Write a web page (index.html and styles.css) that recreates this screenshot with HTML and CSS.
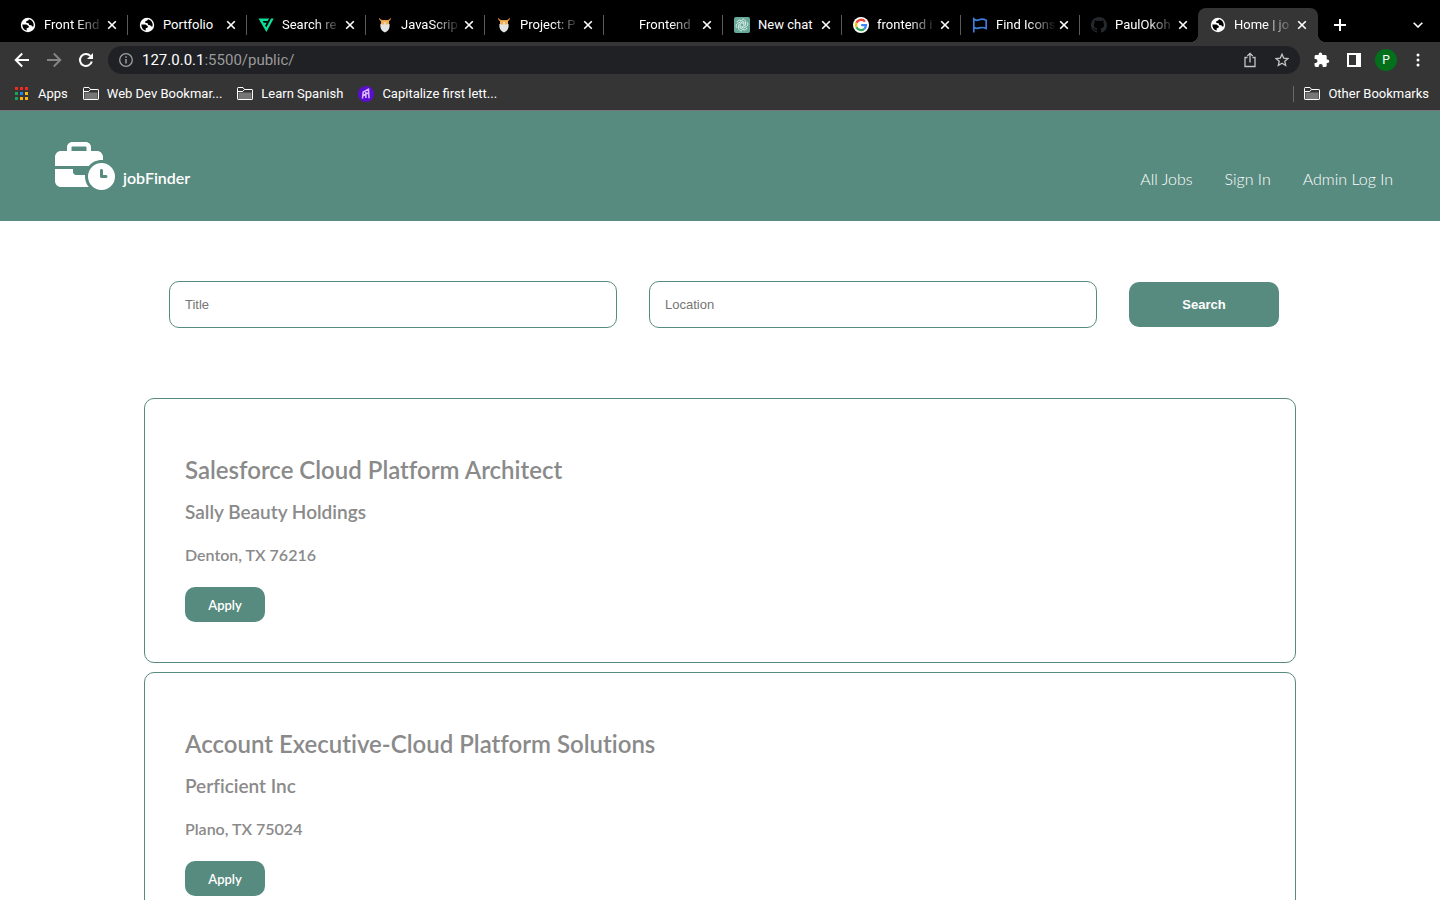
FILE: index.html
```
<!DOCTYPE html>
<html lang="en">
<head>
<meta charset="utf-8">
<title>Home | jobFinder</title>
<link rel="stylesheet" href="styles.css">
</head>
<body>
<svg class="sprite" aria-hidden="true">
  <symbol id="close" viewBox="0 0 10 10"><path d="M1.2 1.2l7.6 7.6M8.8 1.2L1.2 8.8" stroke="#fff" stroke-width="1.6" fill="none"/></symbol>
  <symbol id="globe" viewBox="0 0 16 16"><circle cx="8" cy="8" r="7.2" fill="#fff"/><path class="land" d="M2.300 7.500h4.200l2.400 1.700-.4 1.500-1.800.6v2.300c-2.500-.5-4.400-2.600-4.400-6.100zM9 2.300L8.200 3.500 6.300 4.200l-.2 1.600 2.500.5.7 1.600 2 .4.8 1.200 1.500-.3c.5-3-1-6-4.600-6.900z"/></symbol>
  <symbol id="odin" viewBox="0 0 16 16"><path d="M2 .8c0 2 .8 3 2 3.400h8c1.200-.4 2-1.400 2-3.400l-1.700 1.500L11 3H5L3.700 2.300z" fill="#d98e32"/><path d="M4 3.500h8v5H4z" fill="#efb15b"/><path d="M3.500 6.800l2 .7h5l2-.7c.6 3.900-.8 7.400-4.500 8.700C4.300 14.200 2.900 10.700 3.500 6.800z" fill="#e4e4e4"/><path d="M7.200 5h1.600v3H7.200z" fill="#f7ddb8"/></symbol>
  <symbol id="folder" viewBox="0 0 16 14"><path d="M1.500 5.500h13v7h-13z" fill="#777"/><path d="M.5 1.500v10.400c0 .4.200.6.600.6h13.800c.4 0 .6-.2.600-.6V3.100c0-.4-.2-.6-.6-.6H7.500L6 .5H1.100c-.4 0-.6.4-.6 1zM1 4.500h4.700l1.800-2" fill="none" stroke="#fff"/></symbol>
</svg>

<header class="browser">
  <nav class="tabs" aria-label="Tabs">
    <div class="tab"><svg class="fav"><use href="#globe"/></svg><span class="name">Front End</span><button class="x" aria-label="Close"><svg><use href="#close"/></svg></button></div>
    <div class="tab"><svg class="fav"><use href="#globe"/></svg><span class="name whole">Portfolio</span><button class="x" aria-label="Close"><svg><use href="#close"/></svg></button></div>
    <div class="tab"><svg class="fav" viewBox="0 0 16 16"><path d="M.5 1.500h10.700L9.600 4H4.700l1 1.800h3L7.500 8H6.900l1.400 2.500 4.700-9h2.700L8.400 15z" fill="#0be09b"/></svg><span class="name">Search re</span><button class="x" aria-label="Close"><svg><use href="#close"/></svg></button></div>
    <div class="tab"><svg class="fav"><use href="#odin"/></svg><span class="name">JavaScrip</span><button class="x" aria-label="Close"><svg><use href="#close"/></svg></button></div>
    <div class="tab"><svg class="fav"><use href="#odin"/></svg><span class="name">Project: P</span><button class="x" aria-label="Close"><svg><use href="#close"/></svg></button></div>
    <div class="tab"><svg class="fav"></svg><span class="name">Frontend</span><button class="x" aria-label="Close"><svg><use href="#close"/></svg></button></div>
    <div class="tab"><svg class="fav" viewBox="0 0 16 16"><rect width="16" height="16" rx="2" fill="#67aa9b"/><g fill="none" stroke="#fff" stroke-width=".7"><path id="petal" d="M8 2.300a2.700 2.700 0 0 1 3.500 2.600v3.300L8.300 10"/><use href="#petal" transform="rotate(60 8 8)"/><use href="#petal" transform="rotate(120 8 8)"/><use href="#petal" transform="rotate(180 8 8)"/><use href="#petal" transform="rotate(240 8 8)"/><use href="#petal" transform="rotate(300 8 8)"/></g></svg><span class="name whole">New chat</span><button class="x" aria-label="Close"><svg><use href="#close"/></svg></button></div>
    <div class="tab"><svg class="fav" viewBox="0 0 16 16"><circle cx="8" cy="8" r="8" fill="#fff"/><g fill="none" stroke-width="2.300"><path d="M12 4.600A5 5 0 0 0 3.500 5.800" stroke="#ea4335"/><path d="M3.500 5.800a5 5 0 0 0 0 4.400" stroke="#fbbc05"/><path d="M3.500 10.200a5 5 0 0 0 7.800 1.600" stroke="#34a853"/><path d="M11.300 11.800A5 5 0 0 0 13 8.100H8.200" stroke="#4285f4"/></g></svg><span class="name">frontend i</span><button class="x" aria-label="Close"><svg><use href="#close"/></svg></button></div>
    <div class="tab"><svg class="fav" viewBox="0 0 16 16"><path d="M1.800 15.500V2c2.500 2.200 3.800 1.300 5.500.7C9.700 1.800 11.500 2 14.200 3.200v8.200c-3-1.500-4.600-1.100-6.700-.5-2 .6-3.700.8-5.700-.7" fill="none" stroke="#3f7ddc" stroke-width="1.700"/></svg><span class="name">Find Icons</span><button class="x" aria-label="Close"><svg><use href="#close"/></svg></button></div>
    <div class="tab"><svg class="fav" viewBox="0 0 16 16"><path d="M8 0C3.580 0 0 3.580 0 8c0 3.540 2.290 6.530 5.470 7.590.4.070.55-.17.55-.38 0-.19-.01-.82-.01-1.490-2.010.37-2.530-.49-2.690-.94-.09-.23-.48-.94-.82-1.130-.28-.15-.68-.52-.01-.53.63-.01 1.080.58 1.230.82.72 1.210 1.870.87 2.330.66.07-.52.28-.87.51-1.070-1.780-.2-3.640-.89-3.640-3.950 0-.87.31-1.590.82-2.150-.08-.2-.36-1.020.08-2.120 0 0 .67-.21 2.200.82.64-.18 1.320-.27 2-.27s1.360.09 2 .27c1.530-1.040 2.200-.82 2.200-.82.44 1.100.16 1.920.08 2.120.51.56.82 1.270.82 2.150 0 3.070-1.870 3.750-3.650 3.950.29.25.54.73.54 1.480 0 1.070-.01 1.930-.01 2.200 0 .21.15.46.55.38A8.010 8.010 0 0 0 16 8c0-4.420-3.580-8-8-8z" fill="#24292e"/></svg><span class="name">PaulOkoh</span><button class="x" aria-label="Close"><svg><use href="#close"/></svg></button></div>
    <div class="tab active"><svg class="fav"><use href="#globe"/></svg><span class="name">Home | jo</span><button class="x" aria-label="Close"><svg><use href="#close"/></svg></button></div>
    <button class="newtab" aria-label="New tab"><svg width="12" height="12" viewBox="0 0 12 12"><path d="M6 0v12M0 6h12" stroke="#fff" stroke-width="2"/></svg></button>
    <button class="tabsearch" aria-label="Search tabs"><svg width="10" height="6" viewBox="0 0 10 6"><path d="M.7.7L5 5 9.300.7" fill="none" stroke="#fff" stroke-width="1.600"/></svg></button>
  </nav>

  <div class="toolbar">
    <button aria-label="Back"><svg width="16" height="16" viewBox="0 0 16 16"><path d="M15 8H2M8.200 1.500L1.700 8l6.500 6.500" fill="none" stroke="#fff" stroke-width="1.900"/></svg></button>
    <button aria-label="Forward"><svg width="16" height="16" viewBox="0 0 16 16"><path d="M1 8h13M7.800 1.500L14.300 8l-6.500 6.500" fill="none" stroke="#868686" stroke-width="1.900"/></svg></button>
    <button aria-label="Reload"><svg width="16" height="16" viewBox="0 0 16 16"><path d="M13.800 9.500A6 6 0 1 1 12.400 3.900" fill="none" stroke="#fff" stroke-width="2"/><path d="M15 1v6H9z" fill="#fff"/></svg></button>
    <div class="address">
      <svg width="14" height="14" viewBox="0 0 14 14"><circle cx="7" cy="7" r="6.300" fill="none" stroke="#9aa0a6" stroke-width="1.300"/><path d="M7 6v4.500M7 3.300v1.500" stroke="#9aa0a6" stroke-width="1.500"/></svg>
      <span class="url"><b>127.0.0.1</b>:5500/public/</span>
      <svg width="12" height="16" viewBox="0 0 12 16"><path d="M3.500 5.500H1v9h10v-9H8.500M6 10.500V1.500M3.300 4L6 1.300 8.700 4" fill="none" stroke="#c4c4c4" stroke-width="1.300"/></svg>
      <svg width="14" height="14" viewBox="0 0 14 14"><path d="M7 1.200l1.700 3.900 4.300.4-3.200 2.800.9 4.200L7 10.300l-3.700 2.200.9-4.200L1 5.500l4.300-.4z" fill="none" stroke="#c4c4c4" stroke-width="1.300"/></svg>
    </div>
    <button aria-label="Extensions"><svg width="16" height="16" viewBox="0 0 16 16"><path d="M13.500 7.500h-.8V4.300c0-.8-.6-1.400-1.400-1.400H8.200V2.200a1.800 1.800 0 0 0-3.600 0v.7H2C1.200 2.900.6 3.500.6 4.300v2.600h.9a2 2 0 0 1 0 4H.6v2.700c0 .8.6 1.400 1.400 1.400h2.700v-.9a2 2 0 0 1 4 0v.9h2.600c.8 0 1.400-.6 1.400-1.400v-2.500h.8a1.800 1.800 0 0 0 0-3.600z" fill="#fff"/></svg></button>
    <button aria-label="Side panel"><svg width="14" height="14" viewBox="0 0 14 14"><path d="M1 1h12v12H1z" fill="none" stroke="#fff" stroke-width="2"/><path d="M9 1h4v12H9z" fill="#fff"/></svg></button>
    <button class="avatar">P</button>
    <button aria-label="Menu"><svg width="4" height="14" viewBox="0 0 4 14"><g fill="#fff"><circle cx="2" cy="2" r="1.500"/><circle cx="2" cy="7" r="1.500"/><circle cx="2" cy="12" r="1.500"/></g></svg></button>
  </div>

  <nav class="bookmarks" aria-label="Bookmarks">
    <a href="#"><svg width="14" height="14" viewBox="0 0 14 14"><path d="M0 0h3v3H0zM5 0h3v3H5zM10 0h3v3h-3z" fill="#f0281e"/><path d="M0 5h3v3H0zM0 10h3v3H0z" fill="#17a556"/><path d="M5 5h3v3H5z" fill="#1c86f2"/><path d="M10 5h3v3h-3zM5 10h3v3H5zM10 10h3v3h-3z" fill="#fbb416"/></svg>Apps</a>
    <a href="#"><svg width="16" height="14"><use href="#folder"/></svg>Web Dev Bookmar...</a>
    <a href="#"><svg width="16" height="14"><use href="#folder"/></svg>Learn Spanish</a>
    <a href="#"><svg width="16" height="16" viewBox="0 0 16 16"><circle cx="8" cy="8" r="8" fill="#5a0fd0"/><path d="M4.500 12.500l.7-6.500 5.300-2.700.5 9M5 9.500l5.700-2.700M7.800 12V6" fill="none" stroke="#d9b8ff" stroke-width="1.500"/></svg>Capitalize first lett...</a>
    <a href="#" class="other"><svg width="16" height="14"><use href="#folder"/></svg>Other Bookmarks</a>
  </nav>
</header>

<header class="site">
  <a class="brand" href="#"><svg width="60" height="48" viewBox="0 0 640 512"><path fill="#fff" d="M184 48H328c4.400 0 8 3.600 8 8V96H176V56c0-4.400 3.600-8 8-8zm-56 8V96H64C28.700 96 0 124.700 0 160v96H192 352h8.200c32.300-39.100 81.100-64 135.800-64c5.400 0 10.700 .2 16 .7V160c0-35.300-28.700-64-64-64H384V56c0-30.900-25.100-56-56-56H184c-30.900 0-56 25.100-56 56zM320 352H224c-17.700 0-32-14.300-32-32V288H0V416c0 35.300 28.700 64 64 64H360.200C335.100 449.600 320 410.500 320 368c0-5.400 .2-10.700 .7-16l-.7 0zm320 16a144 144 0 1 0 -288 0 144 144 0 1 0 288 0zM496 288c8.800 0 16 7.200 16 16v48h32c8.800 0 16 7.200 16 16s-7.200 16-16 16H496c-8.800 0-16-7.200-16-16V304c0-8.800 7.200-16 16-16z"/></svg><span>jobFinder</span></a>
  <nav class="links"><a href="#">All Jobs</a><a href="#">Sign In</a><a href="#">Admin Log In</a></nav>
</header>

<main>
  <form class="search">
    <input type="text" placeholder="Title" aria-label="Title">
    <input type="text" placeholder="Location" aria-label="Location">
    <button type="button">Search</button>
  </form>
  <section class="jobs">
    <article class="job"><h2>Salesforce Cloud Platform Architect</h2><h3>Sally Beauty Holdings</h3><p>Denton, TX 76216</p><button>Apply</button></article>
    <article class="job"><h2>Account Executive-Cloud Platform Solutions</h2><h3>Perficient Inc</h3><p>Plano, TX 75024</p><button>Apply</button></article>
  </section>
</main>
</body>
</html>
```
FILE: styles.css
```
* { box-sizing: border-box; }
html, body { height: 100%; }
body { margin: 0; overflow: hidden; background: #fff; font-family: Lato, sans-serif; }
button { border: 0; padding: 0; background: none; color: #fff; }
a { color: inherit; text-decoration: none; }
svg { display: block; flex: none; }
.sprite { position: absolute; width: 0; height: 0; }

.browser { background: #353535; border-bottom: 1px solid #777; color: #fff; font: 400 13px/16px Roboto, sans-serif; }
.tabs { display: flex; height: 42px; padding: 8px 17px 0 9px; background: #000; }
.tab { display: flex; align-items: center; flex: 0 1 119px; min-width: 0; padding: 0 11px; position: relative; }
.tab::after { content: ""; position: absolute; right: 0; top: 7px; height: 20px; width: 1px; background: #5a5a5a; }
.tab:nth-child(10)::after { display: none; }
.tab.active { background: #353535; border-radius: 8px 8px 0 0; flex-basis: 120px; margin-left: -1px; padding-left: 12px; }
.tab.active::before, .tab.active::after { content: ""; position: absolute; top: auto; bottom: 0; width: 8px; height: 8px; }
.tab.active::before { left: -8px; background: radial-gradient(circle at 0 0, transparent 8px, #353535 8px); }
.tab.active::after { right: -8px; background: radial-gradient(circle at 100% 0, transparent 8px, #353535 8px); }
.fav { width: 16px; height: 16px; }
.land { fill: #000; }
.active .land { fill: #353535; }
.name { flex: 1; min-width: 0; margin: 0 2px 0 8px; white-space: nowrap; -webkit-mask-image: linear-gradient(90deg, #000 32px, transparent 60px); mask-image: linear-gradient(90deg, #000 32px, transparent 60px); }
.name.whole { -webkit-mask-image: none; mask-image: none; }
.x svg { width: 10px; height: 10px; }
.newtab { margin-left: 16px; }
.tabsearch { margin-left: auto; }

.toolbar { display: flex; align-items: center; height: 36px; gap: 10px; padding: 0 11px; }
.toolbar button { display: grid; place-items: center; width: 22px; height: 22px; }
.address { flex: 1; display: flex; align-items: center; gap: 19px; height: 28px; margin: 0 1px; padding: 0 11px; border-radius: 14px; background: #202124; font-size: 15px; color: #9a9a9a; }
.url { flex: 1; margin-left: -10px; }
.url b { font-weight: 400; color: #fff; }
.toolbar .avatar { border-radius: 50%; background: #04701c; font: 400 12px Roboto, sans-serif; }

.bookmarks { display: flex; align-items: center; height: 32px; padding: 0 11px 0 15px; gap: 15px; }
.bookmarks a { display: flex; align-items: center; gap: 8px; }
.bookmarks a:first-child { gap: 9px; }
.bookmarks .other { margin-left: auto; padding-left: 10px; border-left: 1px solid #6a6a6a; }

.site { display: flex; align-items: flex-end; justify-content: space-between; height: 110px; padding: 0 47px 31px 55px; background: #588b80; color: #fff; }
.brand { display: flex; align-items: flex-end; gap: 8px; font-size: 16px; line-height: 24px; font-weight: 600; }
.links { display: flex; gap: 32px; font-size: 16px; line-height: 23px; font-weight: 300; }

main { padding: 60px 10% 0; }
.search { display: flex; align-items: center; gap: 32px; padding: 0 17px 0 25px; }
.search input { flex: 1; min-width: 0; height: 47px; padding: 0 15px; border: 1px solid #588b80; border-radius: 10px; font: 13px "Liberation Sans", Arial, sans-serif; }
.search input::placeholder { color: #757575; }
.search button { width: 150px; height: 45px; border-radius: 10px; background: #588b80; font: 700 13px "Liberation Sans", Arial, sans-serif; }
.jobs { display: flex; flex-direction: column; gap: 9px; margin-top: 70px; }
.job { padding: 56px 40px 40px; border: 1px solid #588b80; border-radius: 10px; color: #8a8a8a; font-variant-ligatures: none; }
.job h2, .job h3, .job p { margin: 0; font-weight: 600; }
.job h2 { font-size: 24px; line-height: 29px; }
.job h3 { margin-top: 16px; font-size: 19px; line-height: 23px; }
.job p { margin-top: 22px; font-size: 16px; line-height: 19px; }
.job button { display: block; width: 80px; height: 35px; margin-top: 23px; border-radius: 10px; background: #588b80; font: 600 13px Lato, sans-serif; }
```
